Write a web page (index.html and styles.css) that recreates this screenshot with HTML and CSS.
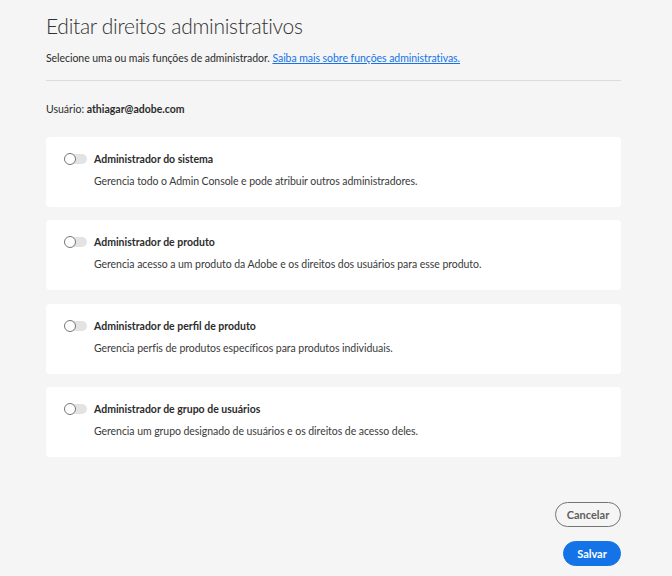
FILE: index.html
```html
<!DOCTYPE html>
<html lang="pt-BR">
<head>
<meta charset="utf-8">
<link rel="stylesheet" href="styles.css">
</head>
<body>
<main class="dialog">
  <h1 class="title">Editar direitos administrativos</h1>
  <p class="intro">Selecione uma ou mais funções de administrador. <a href="#" class="link">Saiba mais sobre funções administrativas.</a></p>
  <hr class="divider">
  <p class="user">Usuário: <strong>athiagar@adobe.com</strong></p>
  <ul class="roles">
    <li class="card">
      <div class="row"><span class="toggle"><span class="knob"></span></span><span class="card-title">Administrador do sistema</span></div>
      <p class="desc">Gerencia todo o Admin Console e pode atribuir outros administradores.</p>
    </li>
    <li class="card">
      <div class="row"><span class="toggle"><span class="knob"></span></span><span class="card-title">Administrador de produto</span></div>
      <p class="desc">Gerencia acesso a um produto da Adobe e os direitos dos usuários para esse produto.</p>
    </li>
    <li class="card">
      <div class="row"><span class="toggle"><span class="knob"></span></span><span class="card-title">Administrador de perfil de produto</span></div>
      <p class="desc">Gerencia perfis de produtos específicos para produtos individuais.</p>
    </li>
    <li class="card">
      <div class="row"><span class="toggle"><span class="knob"></span></span><span class="card-title">Administrador de grupo de usuários</span></div>
      <p class="desc">Gerencia um grupo designado de usuários e os direitos de acesso deles.</p>
    </li>
  </ul>
  <div class="actions">
    <button class="btn btn-secondary">Cancelar</button>
    <button class="btn btn-primary">Salvar</button>
  </div>
</main>
</body>
</html>
```
FILE: styles.css
```css
html, body {
  margin: 0;
  padding: 0;
  background: #f5f5f5;
}
body {
  font-family: Lato, "Open Sans", sans-serif;
  color: #2c2c2c;
  width: 672px;
  height: 576px;
  overflow: hidden;
}
.dialog {
  padding: 10px 51px 0 46px;
}
.title {
  margin: 0;
  font-weight: 300;
  font-size: 21px;
  line-height: 32px;
  letter-spacing: -0.3px;
  color: #323232;
}
.intro {
  margin: 8px 0 0;
  font-size: 10.5px;
  line-height: 16px;
  letter-spacing: -0.05px;
  color: #2c2c2c;
}
.link {
  color: #1473e6;
  text-decoration: underline;
}
.divider {
  margin: 14px 0 0;
  border: 0;
  border-top: 1px solid #dcdcdc;
  height: 0;
}
.user {
  margin: 20px 0 0;
  font-size: 10.5px;
  line-height: 16px;
}
.user strong {
  font-weight: 700;
}
.roles {
  list-style: none;
  margin: 20px 0 0;
  padding: 0;
  display: flex;
  flex-direction: column;
  gap: 13.33px;
}
.card {
  background: #ffffff;
  border-radius: 4px;
  height: 70px;
  box-sizing: border-box;
  padding: 14px 18px 0 19px;
}
.row {
  display: flex;
  align-items: center;
  gap: 7px;
  height: 16px;
}
.toggle {
  width: 22px;
  height: 10px;
  border-radius: 5px;
  background: #e3e3e3;
  position: relative;
  flex: none;
}
.knob {
  position: absolute;
  left: 0;
  top: -1px;
  width: 10px;
  height: 10px;
  border-radius: 50%;
  background: #fff;
  border: 1px solid #767676;
  box-sizing: content-box;
  margin-left: -1px;
}
.card-title {
  font-size: 10.5px;
  font-weight: 700;
  color: #2c2c2c;
}
.desc {
  margin: 6px 0 0 29px;
  font-size: 10.5px;
  line-height: 16px;
  letter-spacing: -0.05px;
  color: #3a3a3a;
}
.actions {
  display: flex;
  flex-direction: column;
  align-items: flex-end;
  gap: 14px;
  margin-top: 45px;
}
.btn {
  font-family: Lato, "Open Sans", sans-serif;
  font-size: 11px;
  font-weight: 700;
  height: 25px;
  border-radius: 13px;
  padding: 0 10px;
  cursor: pointer;
}
.btn-secondary {
  background: transparent;
  border: 1px solid #747474;
  color: #5e5e5e;
  width: 66px;
}
.btn-primary {
  background: #1473e6;
  border: 1px solid #1473e6;
  color: #fff;
  width: 58px;
}
```
